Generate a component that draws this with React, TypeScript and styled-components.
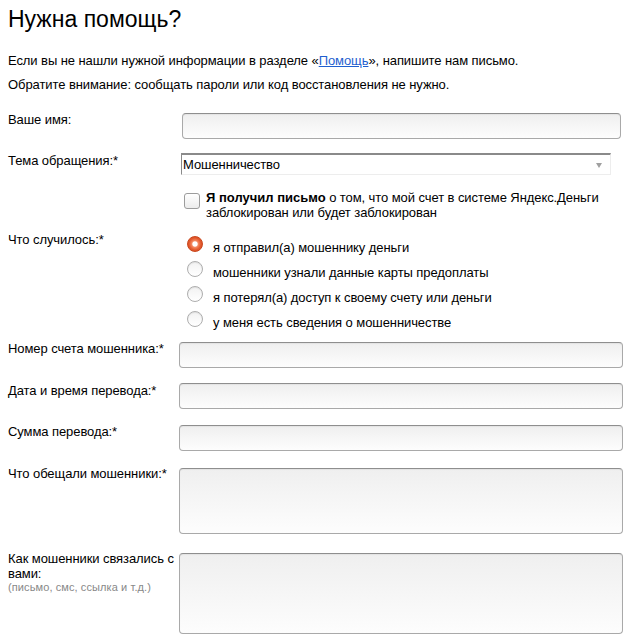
import React from 'react';
import styled, { createGlobalStyle } from 'styled-components';

const GlobalStyle = createGlobalStyle`
  html, body {
    margin: 0;
    padding: 0;
    background: #fff;
  }
  body {
    font-family: "Liberation Sans", Arial, sans-serif;
    font-size: 13px;
    letter-spacing: -0.08px;
    color: #000;
  }
`;

const Page = styled.div`
  width: 632px;
  padding: 0 9px 0 8px;
  box-sizing: border-box;
`;

const Title = styled.h1`
  margin: 5px 0 0;
  font-size: 23px;
  line-height: 28px;
  font-weight: normal;
  letter-spacing: 0;
`;

const Para = styled.p<{ $top: number }>`
  margin: ${p => p.$top}px 0 0;
  line-height: 16px;
`;

const Link = styled.a`
  color: #1f5fcf;
  text-decoration: underline;
`;

const Row = styled.div<{ $top: number }>`
  display: grid;
  grid-template-columns: 171px 444px;
  align-items: start;
  margin-top: ${p => p.$top}px;
`;

const Label = styled.div<{ $shift?: number }>`
  line-height: 15px;
  margin-top: ${p => p.$shift ?? 0}px;
`;

const Hint = styled.div`
  font-size: 11px;
  line-height: 12px;
  letter-spacing: 0.1px;
  color: #888;
`;

const fieldLook = `
  display: block;
  box-sizing: border-box;
  border: 1px solid #a9a9a9;
  border-top-color: #8e8e8e;
  border-radius: 4px;
  background: linear-gradient(#efefef, #fdfdfd);
  box-shadow: inset 0 1px 1px rgba(0, 0, 0, 0.05);
  font-family: "Liberation Sans", Arial, sans-serif;
  font-size: 13px;
  outline: none;
  padding: 3px 6px;
`;

const Field = styled.input<{ $indent?: number; $width?: number }>`
  ${fieldLook}
  height: 26px;
  margin-left: ${p => p.$indent ?? 0}px;
  width: ${p => p.$width ?? 444}px;
`;

const Area = styled.textarea<{ $height: number }>`
  ${fieldLook}
  resize: none;
  width: 444px;
  height: ${p => p.$height}px;
`;

const Select = styled.div`
  display: flex;
  align-items: center;
  justify-content: space-between;
  box-sizing: border-box;
  margin-left: 2px;
  width: 430px;
  height: 22px;
  border-top: 2px solid #8a8a8a;
  border-left: 1px solid #8a8a8a;
  border-right: 1px solid #ededed;
  border-bottom: 1px solid #ededed;
  padding: 0 8px 0 1px;
  background: #fff;
  line-height: 15px;
`;

const Arrow = styled.span`
  width: 0;
  height: 0;
  border-left: 3.5px solid transparent;
  border-right: 3.5px solid transparent;
  border-top: 5px solid #a0a0a0;
  margin-top: 1px;
`;

const CheckLine = styled.label`
  display: flex;
  align-items: flex-start;
  line-height: 15px;
`;

const CheckBox = styled.span`
  flex: none;
  box-sizing: border-box;
  width: 16px;
  height: 16px;
  margin: 3px 6px 0 5px;
  border: 1px solid #9c9c9c;
  border-radius: 3px;
  background: linear-gradient(#ffffff, #ececec);
`;

const CheckText = styled.span`
  width: 406px;

  b {
    letter-spacing: 0;
  }
`;

const RadioList = styled.div`
  display: flex;
  flex-direction: column;
`;

const RadioItem = styled.label`
  display: flex;
  align-items: flex-start;
  height: 25px;
  line-height: 25px;
`;

const RadioDot = styled.span<{ $checked?: boolean }>`
  flex: none;
  box-sizing: border-box;
  width: 16px;
  height: 16px;
  margin: 1px 10px 0 8px;
  border-radius: 50%;
  border: 1px solid ${p => (p.$checked ? '#c8461c' : '#aeaeae')};
  background: ${p =>
    p.$checked
      ? 'radial-gradient(circle, #fff 0 2.2px, #f58a62 3.2px, #e2572b 6px, #d54c21 100%)'
      : 'linear-gradient(#f2f2f2, #ffffff)'};
  box-shadow: ${p => (p.$checked ? 'none' : 'inset 0 1px 1px rgba(0, 0, 0, 0.08)')};
`;

const reasons = [
  'я отправил(а) мошеннику деньги',
  'мошенники узнали данные карты предоплаты',
  'я потерял(а) доступ к своему счету или деньги',
  'у меня есть сведения о мошенничестве',
];

export default function App() {
  return (
    <Page>
      <GlobalStyle />
      <Title>Нужна помощь?</Title>
      <Para $top={20}>
        Если вы не нашли нужной информации в разделе «<Link href="#">Помощь</Link>», напишите нам письмо.
      </Para>
      <Para $top={8}>Обратите внимание: сообщать пароли или код восстановления не нужно.</Para>

      <Row $top={20}>
        <Label $shift={-1}>Ваше имя:</Label>
        <Field $indent={3} $width={439} />
      </Row>

      <Row $top={14}>
        <Label $shift={0}>Тема обращения:*</Label>
        <Select>
          <span>Мошенничество</span>
          <Arrow />
        </Select>
      </Row>

      <Row $top={15}>
        <div />
        <CheckLine>
          <CheckBox />
          <CheckText>
            <b>Я получил письмо</b> о том, что мой счет в системе Яндекс.Деньги заблокирован или будет
            заблокирован
          </CheckText>
        </CheckLine>
      </Row>

      <Row $top={15}>
        <Label $shift={-3}>Что случилось:*</Label>
        <RadioList>
          {reasons.map((r, i) => (
            <RadioItem key={r}>
              <RadioDot $checked={i === 0} />
              <span>{r}</span>
            </RadioItem>
          ))}
        </RadioList>
      </Row>

      <Row $top={7}>
        <Label $shift={-1}>Номер счета мошенника:*</Label>
        <Field />
      </Row>

      <Row $top={15}>
        <Label>Дата и время перевода:*</Label>
        <Field />
      </Row>

      <Row $top={16}>
        <Label $shift={-1}>Сумма перевода:*</Label>
        <Field />
      </Row>

      <Row $top={17}>
        <Label $shift={-2}>Что обещали мошенники:*</Label>
        <Area $height={66} />
      </Row>

      <Row $top={19}>
        <Label $shift={-2}>
          Как мошенники связались с вами:
          <Hint>(письмо, смс, ссылка и т.д.)</Hint>
        </Label>
        <Area $height={81} />
      </Row>
    </Page>
  );
}
